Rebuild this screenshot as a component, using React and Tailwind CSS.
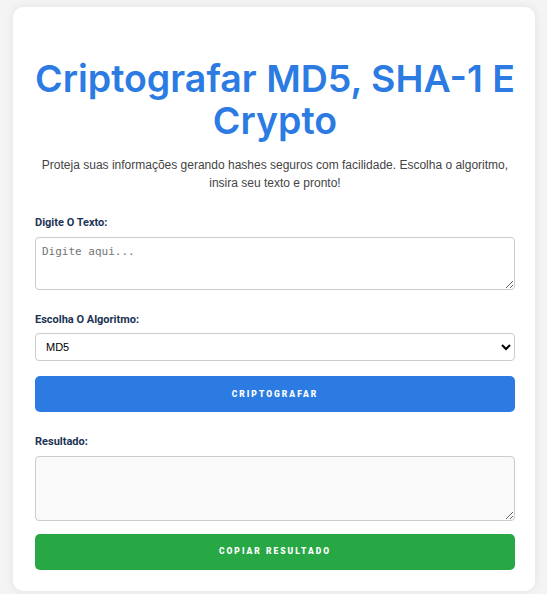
import { useState } from 'react'

const LABEL = "block text-[11px] font-bold text-[#1c3454] mb-[5px] font-['Roboto',sans-serif]"
const BTN = "w-full h-[36px] rounded-[5px] text-white text-[8.5px] font-black tracking-[2px] uppercase font-['Roboto',sans-serif]"

export default function App() {
  const [text, setText] = useState('')
  const [algo, setAlgo] = useState('md5')

  return (
    <div className="min-h-[594px] bg-[#f4f4f4] pt-[7px] pb-[3px] font-['Inter',sans-serif]">
      <div className="ml-[13px] w-[522px] bg-white rounded-[10px] shadow-[0_0_10px_rgba(0,0,0,0.08)] pl-[22px] pr-[20px] pt-[51px] pb-[21px]">
        <h1 className="text-center text-[37.5px] leading-[42px] font-semibold text-[#2b7be3]">
          Criptografar MD5, SHA-1 E Crypto
        </h1>
        <p className="mt-[14px] text-center text-[12px] leading-[18px] text-[#444] font-['Liberation_Sans',Arial,sans-serif]">
          Proteja suas informações gerando hashes seguros com facilidade. Escolha o algoritmo, insira seu texto e pronto!
        </p>

        <div className="mt-[23px]">
          <label className={LABEL}>Digite O Texto:</label>
          <textarea
            value={text}
            onChange={e => setText(e.target.value)}
            placeholder="Digite aqui..."
            className="block w-full h-[53px] border border-[#ccc] rounded-[4px] px-[6px] py-[6px] text-[11px] font-['DejaVu_Sans_Mono',monospace] placeholder:text-[#757575] outline-none"
          />
        </div>

        <div className="mt-[22px]">
          <label className={LABEL}>Escolha O Algoritmo:</label>
          <select
            value={algo}
            onChange={e => setAlgo(e.target.value)}
            className="block w-full h-[28px] border border-[#ccc] rounded-[4px] px-[6px] text-[11px] text-black bg-white font-['Liberation_Sans',Arial,sans-serif]"
          >
            <option value="md5">MD5</option>
            <option value="sha1">SHA-1</option>
            <option value="crypto">Crypto</option>
          </select>
        </div>

        <button className={`mt-[15px] bg-[#2b7be3] ${BTN}`}>Criptografar</button>

        <div className="mt-[22px]">
          <label className={LABEL}>Resultado:</label>
          <textarea
            readOnly
            className="block w-full h-[65px] border border-[#ccc] rounded-[4px] bg-[#f9f9f9] px-[6px] py-[6px] text-[11px] outline-none"
          />
        </div>

        <button className={`mt-[13px] bg-[#28a745] ${BTN}`}>Copiar Resultado</button>
      </div>
    </div>
  )
}
